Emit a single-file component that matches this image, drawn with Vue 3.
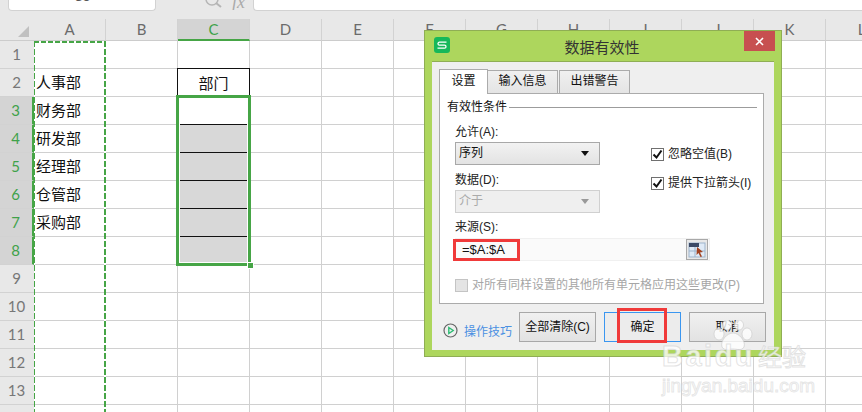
<script setup>
const cols = ['A','B','C','D','E','F','G','H','I','J','K','L']
const rows = Array.from({length:14},(_,i)=>i+1)
const cells = {'A2':'人事部','A3':'财务部','A4':'研发部','A5':'经理部','A6':'仓管部','A7':'采购部','C2':'部门'}
function cellClass(c,r){
  const k=[]
  if(c==='C'&&r===2) k.push('head-cell')
  if(c==='C'&&r>=3&&r<=8) k.push(r===3?'act-cell':'sel-cell')
  return k
}
</script>

<template>
  <div class="page">
    <div class="fbar">
      <div class="namebox"><span>C3</span></div>
      <div class="fbtns">
        <svg width="18" height="10" viewBox="0 0 18 10"><circle cx="7" cy="-1" r="6" fill="none" stroke="#b5b5b5" stroke-width="1.500"/><path d="M11 3l5 4" stroke="#b5b5b5" stroke-width="2"/></svg>
        <span class="fx">fx</span>
      </div>
      <div class="finput"></div>
    </div>

    <div class="sheet">
      <div class="corner"><i></i></div>
      <div v-for="c in cols" :key="c" class="colh" :class="{on:c==='C'}">{{ c }}</div>
      <template v-for="r in rows" :key="r">
        <div class="rowh" :class="{on:r>=3&&r<=8}">{{ r }}</div>
        <div v-for="c in cols" :key="c" class="cell" :class="cellClass(c,r)">{{ cells[c+r] }}</div>
      </template>

      <div class="ants"></div>
      <div class="selection"></div>
      <div class="handle"></div>
    </div>

    <div class="dialog">
      <div class="dtitle">
        <span class="logo"><svg width="16" height="16" viewBox="0 0 16 16"><path d="M12.500 5.200H5.500a1.500 1.500 0 0 0 0 3h5a1.500 1.500 0 0 1 0 3H3.500" fill="none" stroke="#fff" stroke-width="1.300"/></svg></span>
        <span class="ttext">数据有效性</span>
        <span class="close">
          <svg width="11" height="11" viewBox="0 0 11 11"><path d="M2 2l7 7M9 2l-7 7" stroke="#fff" stroke-width="1.600"/></svg>
        </span>
      </div>
      <div class="dbody">
        <div class="tabs">
          <div class="tab active">设置</div>
          <div class="tab t2">输入信息</div>
          <div class="tab t3">出错警告</div>
        </div>
        <div class="panel">
          <div class="legend"><span>有效性条件</span><i></i></div>
          <div class="fields">
            <div class="left">
              <div class="lbl">允许(A):</div>
              <div class="select">序列<b></b></div>
              <div class="lbl l2">数据(D):</div>
              <div class="select dis">介于<b></b></div>
            </div>
            <div class="right">
              <label class="chk"><span class="box"><svg width="11" height="11" viewBox="0 0 11 11"><path d="M1.500 5.500l3 3 5-7" fill="none" stroke="#111" stroke-width="2"/></svg></span>忽略空值(B)</label>
              <label class="chk c2"><span class="box"><svg width="11" height="11" viewBox="0 0 11 11"><path d="M1.500 5.500l3 3 5-7" fill="none" stroke="#111" stroke-width="2"/></svg></span>提供下拉箭头(I)</label>
            </div>
          </div>
          <div class="lbl l3">来源(S):</div>
          <div class="source">
            <span class="formula">=$A:$A</span>
            <span class="picker">
              <svg width="18" height="16" viewBox="0 0 18 16"><rect x="1" y="1" width="16" height="14" fill="#dfeaf6" stroke="#9db4cc"/><rect x="1" y="1" width="10" height="4" fill="#3c4a66"/><path d="M1 9h16M7 5v10" stroke="#9db4cc"/><path d="M9 5l6 5-3 .5 2 4-1.500 .5-2-4-2 2z" fill="#a2411f"/></svg>
            </span>
          </div>
          <div class="applyall"><span class="box dim"></span>对所有同样设置的其他所有单元格应用这些更改(P)</div>
        </div>
        <div class="foot">
          <div class="tips">
            <svg width="15" height="15" viewBox="0 0 15 15"><circle cx="7.500" cy="7.500" r="6.500" fill="none" stroke="#666" stroke-width="1.200"/><path d="M5.800 4.500l4.400 3-4.400 3z" fill="none" stroke="#2dbb73" stroke-width="1.400"/></svg>
            <span>操作技巧</span>
          </div>
          <button class="btn">全部清除(C)</button>
          <button class="btn ok">确定</button>
          <button class="btn">取消</button>
        </div>
      </div>
    </div>

    <div class="redbox r1"></div>
    <div class="redbox r2"></div>

    <div class="wm">
      <svg class="paw" width="42" height="32" viewBox="0 0 42 32"><g fill="#fff" fill-opacity=".78" stroke="#c8c8c8" stroke-opacity=".6"><ellipse cx="7" cy="14" rx="5" ry="6"/><ellipse cx="15" cy="5" rx="4.500" ry="5"/><ellipse cx="27" cy="5" rx="4.500" ry="5"/><ellipse cx="35" cy="14" rx="5" ry="6"/><path d="M21 13c6 0 13 8 11 14-2 4-7 2-11 2s-9 2-11-2c-2-6 5-14 11-14z"/></g></svg>
      <div class="wm1"><span class="wmb">Baidu</span><span class="wmz">经验</span></div>
      <div class="wm2">jingyan.baidu.com</div>
    </div>
  </div>
</template>

<style>
html,body{margin:0;padding:0;overflow:hidden;background:#fff}
</style>

<style scoped>
.page{position:relative;width:862px;height:412px;overflow:hidden;background:#fff;font-family:"Liberation Sans","Noto Sans CJK SC",sans-serif;color:#111}
.fbar{height:19px;background:#e8e8e8;display:flex;align-items:flex-start;box-sizing:border-box}
.namebox{width:148px;height:11px;margin-left:8px;background:#fff;border:1px solid #d2d2d2;border-top:0;border-radius:0 0 4px 4px;box-sizing:border-box;text-align:center;overflow:hidden}
.namebox span{display:block;margin-top:-12px;font:14px/16px Lato,sans-serif;color:#555}
.fbtns{width:97px;display:flex;justify-content:flex-end;gap:9px;padding-right:8px;box-sizing:border-box;height:10px;overflow:hidden}
.fx{font:italic 18px/10px "Liberation Serif",serif;color:#aaa;margin-top:-3px}
.finput{flex:1;height:11px;background:#fff;border:1px solid #d2d2d2;border-top:0;border-right:0;border-radius:0 0 0 4px;box-sizing:border-box}
.sheet{position:relative;display:grid;grid-template-columns:34px repeat(12,72px);grid-template-rows:22px repeat(14,28px)}
.corner{background:#e8e8e8;position:relative;box-sizing:border-box;border-bottom:1px solid #ccc}
.corner i{position:absolute;left:18px;top:7px;width:0;height:0;border-style:solid;border-width:0 0 11px 11px;border-color:transparent transparent #c0c0c0 transparent}
.colh{background:#e8e8e8;border-right:1px solid #d2d2d2;border-bottom:1px solid #ccc;box-sizing:border-box;text-align:center;font:15px/21px Lato,sans-serif;color:#6b6b6b}
.colh.on{background:#d4d4d4;border-bottom:2px solid #46a546;color:#3fa24a}
.rowh{background:#e8e8e8;border-bottom:1px solid #d2d2d2;box-sizing:border-box;text-align:center;font:15px/27px Lato,sans-serif;color:#777;padding-right:1px}
.rowh.on{background:#d4d4d4;border-right:2px solid #46a546;color:#3fa24a}
.cell{border-right:1px solid #d0d0d0;border-bottom:1px solid #d0d0d0;box-sizing:border-box;font-size:15px;line-height:24px;padding:1px 0 0 2px;white-space:nowrap;color:#111;font-family:"Noto Sans CJK SC",sans-serif}
.head-cell{text-align:center;padding-left:0;border:1px solid #111;margin:-1px 0 0 -1px;padding-top:2px;width:73px;height:29px}
.sel-cell{background:#d8d8d8;border-bottom-color:#111;border-right-color:#111}
.act-cell{background:#fff;border-bottom-color:#111}
.ants{position:absolute;left:34px;top:22px;width:72px;bottom:0;box-sizing:border-box;
  background:
   repeating-linear-gradient(90deg,#46a546 0 5px,#fff 5px 7px) top left/100% 2px no-repeat,
   repeating-linear-gradient(180deg,#46a546 0 6px,#fff 6px 8px) top left/1px 100% no-repeat,
   repeating-linear-gradient(180deg,#46a546 0 6px,#fff 6px 8px) top right/2px 100% no-repeat}
.selection{position:absolute;left:176px;top:76px;width:75px;height:171px;box-sizing:border-box;border:3px solid #46a546;box-shadow:inset 0 0 0 1px #fff}
.handle{position:absolute;left:247px;top:243px;width:5px;height:5px;background:#46a546;border:1px solid #fff}

.dialog{position:absolute;left:424px;top:30px;width:358px;height:327px;box-sizing:border-box;border:1px solid #8fae54;background:#add65d;display:flex;flex-direction:column;padding:0 7px 6px 7px}
.dtitle{height:30px;position:relative;display:flex;align-items:center;justify-content:center;flex:none}
.logo{position:absolute;left:2px;top:6px;width:16px;height:16px;border-radius:3px;background:#16b85a;display:flex}
.ttext{font-size:15px;color:#333;margin-left:-2px;font-family:"Noto Sans CJK SC",sans-serif}
.close{position:absolute;right:-1px;top:0;width:31px;height:20px;background:#c75050;display:flex;align-items:center;justify-content:center}
.dbody{flex:1;background:#efefef;border:1px solid #8fae54;border-width:1px 0 0 0;padding:7px 8px 0 7px;box-sizing:border-box;display:flex;flex-direction:column}
.tabs{display:flex;height:24px;align-items:flex-end;position:relative;z-index:1;flex:none}
.tab{box-sizing:border-box;height:23px;border:1px solid #ababab;border-bottom:0;background:linear-gradient(#f0f0f0,#e4e4e4);font-size:12px;line-height:21px;text-align:center;margin-right:1px}
.tab.active{width:49px;height:25px;background:#fff;margin-right:0;margin-bottom:-1px;line-height:22px}
.tab.t2{width:70px;border-left:0}
.tab.t3{width:71px}
.panel{height:211px;margin-right:2px;background:#fff;border:1px solid #ababab;box-sizing:border-box;padding:6px 6px 0 7px;display:flex;flex-direction:column;flex:none}
.legend{display:flex;align-items:center;font-size:12px;line-height:15px;height:15px}
.legend i{flex:1;height:1px;background:#9c9c9c;margin-left:2px}
.fields{display:flex;padding-left:8px;margin-top:9px}
.left{width:145px}
.lbl{font-size:12px;line-height:17px;color:#222}
.select{margin-top:1px;height:23px;box-sizing:border-box;border:1px solid #a8a8a8;background:linear-gradient(#f2f2f2,#e3e3e3);font-size:12px;line-height:21px;padding-left:3px;position:relative}
.select b{position:absolute;right:10px;top:8px;border:solid transparent;border-width:5px 4px 0 4px;border-top-color:#111}
.select.dis{background:#efefef;border-color:#d0d0d0;color:#aaa}
.select.dis b{border-top-color:#999}
.l2{margin-top:7px}
.right{margin-left:51px;padding-top:23px}
.chk{display:flex;align-items:center;gap:4px;font-size:12px;line-height:15px;height:15px;white-space:nowrap;color:#222}
.c2{margin-top:14px}
.box{width:13px;height:13px;box-sizing:border-box;border:1px solid #707070;background:#fff;display:flex;align-items:center;justify-content:center;flex:none}
.box.dim{background:#e4e4e4;border-color:#c4c4c4}
.l3{padding-left:8px;margin-top:6px}
.source{margin:2px 0 0 8px;width:255px;height:23px;box-sizing:border-box;display:flex;align-items:center;justify-content:space-between;background:#fafafa;border:1px solid #f0f0f0;padding-right:1px;flex:none}
.formula{font:13px/20px "Liberation Sans",sans-serif;padding-left:6px;color:#111}
.picker{width:22px;height:21px;box-sizing:border-box;border:1px solid #a8a8a8;background:#e8e8e8;display:flex;align-items:center;justify-content:center}
.applyall{display:flex;align-items:center;gap:4px;margin:17px 0 0 8px;font-size:12px;line-height:15px;color:#a6a6a6;white-space:nowrap}
.foot{display:flex;align-items:flex-start;margin-top:8px;flex:none}
.tips{display:flex;align-items:center;gap:6px;flex:none;width:80px;padding-left:4px;height:30px;margin-top:3px;box-sizing:border-box;font-size:12px;color:#4a90e2;white-space:nowrap}
.btn{flex:none;width:77px;height:30px;box-sizing:border-box;padding:0;border:1px solid #a8a8a8;background:linear-gradient(#f0f0f0,#e2e2e2);font:12px/1 "Liberation Sans","Noto Sans CJK SC",sans-serif;color:#111}
.btn+.btn{margin-left:8px}
.ok{border-color:#3a96f0;background:#ececec}

.redbox{position:absolute;box-sizing:border-box;border:3px solid #f03a3a}
.r1{left:453px;top:239px;width:67px;height:22px}
.r2{left:617px;top:308px;width:50px;height:35px}

.wm{position:absolute;left:662px;top:320px;width:190px;pointer-events:none}
.paw{position:absolute;left:50px;top:0}
.wm1{margin-top:22px;font:bold 29px/28px "Liberation Sans",sans-serif;display:flex;align-items:center;color:rgba(255,255,255,.75);-webkit-text-stroke:1px rgba(200,200,200,.5);position:relative}
.wmb{letter-spacing:2.500px}
.wmz{font:400 24px/28px "Noto Sans CJK SC",sans-serif;margin-left:3px}
.wm2{font:19px/20px "Liberation Sans",sans-serif;color:rgba(255,255,255,.7);-webkit-text-stroke:1px rgba(200,200,200,.45);margin-top:6px}
</style>
